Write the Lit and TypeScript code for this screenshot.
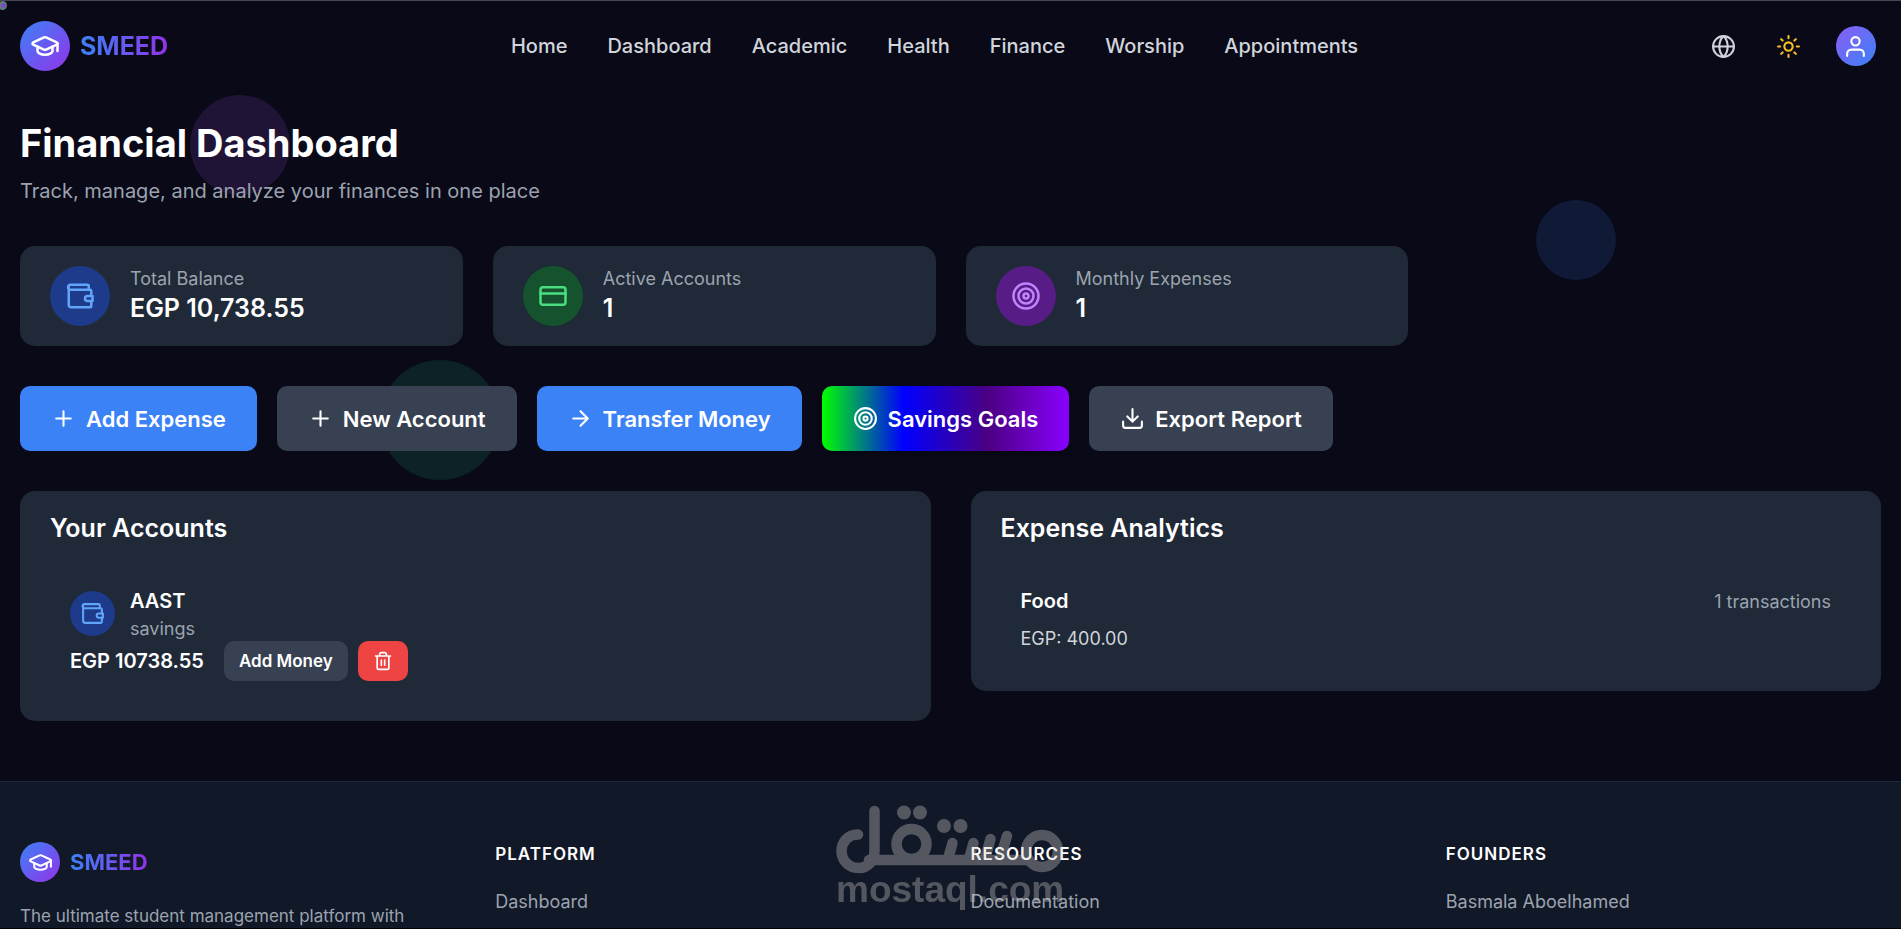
import { LitElement, html, css, svg } from "lit";
import { customElement } from "lit/decorators.js";

const ICONS: Record<string, unknown> = {
  cap: svg`<path d="M21.42 10.92a1 1 0 0 0-.02-1.84L12.83 5.18a2 2 0 0 0-1.66 0l-8.57 3.9a1 1 0 0 0 0 1.83l8.57 3.91a2 2 0 0 0 1.66 0z"/><path d="M22 10v6"/><path d="M6 12.5V16a6 3 0 0 0 12 0v-3.500"/>`,
  globe: svg`<circle cx="12" cy="12" r="10"/><path d="M2 12h20"/><path d="M12 2c2.800 2.700 4 6.200 4 10s-1.200 7.300-4 10c-2.800-2.700-4-6.200-4-10s1.200-7.300 4-10z"/>`,
  sun: svg`<circle cx="12" cy="12" r="4"/><path d="M12 2v2M12 20v2M4.930 4.930l1.410 1.410M17.660 17.660l1.410 1.410M2 12h2M20 12h2M6.340 17.660l-1.410 1.410M19.070 4.930l-1.410 1.410"/>`,
  user: svg`<circle cx="12" cy="7" r="4"/><path d="M20 21v-2a4 4 0 0 0-4-4H8a4 4 0 0 0-4 4v2"/>`,
  wallet: svg`<path d="M19 7V4a1 1 0 0 0-1-1H4.500a2 2 0 0 0 0 4H20a1 1 0 0 1 1 1v4M3 5v14a2 2 0 0 0 2 2h15a1 1 0 0 0 1-1v-4"/><path d="M22 12h-4a2 2 0 0 0 0 4h4z"/>`,
  card: svg`<rect x="2" y="5" width="20" height="14" rx="2"/><path d="M2 10h20"/>`,
  target: svg`<circle cx="12" cy="12" r="10"/><circle cx="12" cy="12" r="6"/><circle cx="12" cy="12" r="2"/>`,
  plus: svg`<path d="M5 12h14M12 5v14"/>`,
  arrow: svg`<path d="M5 12h14M12 5l7 7-7 7"/>`,
  download: svg`<path d="M21 15v4a2 2 0 0 1-2 2H5a2 2 0 0 1-2-2v-4M7 10l5 5 5-5M12 15V3"/>`,
  trash: svg`<path d="M3 6h18M19 6v14a2 2 0 0 1-2 2H7a2 2 0 0 1-2-2V6M8 6V4a2 2 0 0 1 2-2h4a2 2 0 0 1 2 2v2M10 11v6M14 11v6"/>`,
};

const icon = (name: string, size: string) => html`
  <svg class="icon ${size}" viewBox="0 0 24 24" aria-hidden="true">${ICONS[name]}</svg>
`;

const NAV = ["Home", "Dashboard", "Academic", "Health", "Finance", "Worship", "Appointments"];

const STATS = [
  { icon: "wallet", tone: "blue", label: "Total Balance", value: "EGP 10,738.55" },
  { icon: "card", tone: "green", label: "Active Accounts", value: "1" },
  { icon: "target", tone: "purple", label: "Monthly Expenses", value: "1" },
];

const ACTIONS = [
  { icon: "plus", tone: "primary", label: "Add Expense" },
  { icon: "plus", tone: "neutral", label: "New Account" },
  { icon: "arrow", tone: "primary", label: "Transfer Money" },
  { icon: "target", tone: "rainbow", label: "Savings Goals" },
  { icon: "download", tone: "neutral", label: "Export Report" },
];

const FOOTER = [
  { title: "Platform", link: "Dashboard" },
  { title: "Resources", link: "Documentation" },
  { title: "Founders", link: "Basmala Aboelhamed" },
];

@customElement("app-root")
export class AppRoot extends LitElement {
  static styles = css`
    :host {
      display: block;
      position: relative;
      height: 100vh;
      overflow: hidden;
      box-sizing: border-box;
      border-top: 1px solid #46474f;
      border-bottom: 1px solid #000;
      background: #090918;
      color: #fff;
      font-family: Inter, "Liberation Sans", sans-serif;
      font-size: 18px;
      line-height: 25px;
    }
    * { box-sizing: border-box; }
    h1, h2, h3, p { margin: 0; }
    a { color: inherit; text-decoration: none; }
    button {
      border: 0;
      padding: 0;
      background: none;
      color: inherit;
      font: inherit;
      cursor: pointer;
    }
    .icon {
      display: block;
      flex: none;
      fill: none;
      stroke: currentColor;
      stroke-width: 2;
      stroke-linecap: round;
      stroke-linejoin: round;
    }
    .s20 { width: 20px; height: 20px; }
    .s25 { width: 25px; height: 25px; }
    .s30 { width: 30px; height: 30px; }

    .header {
      position: relative;
      display: flex;
      justify-content: space-between;
      align-items: center;
      height: 90px;
      padding: 0 25px 0 20px;
    }
    .brand { display: flex; align-items: center; gap: 10px; }
    .badge {
      display: grid;
      place-items: center;
      width: 50px;
      height: 50px;
      border-radius: 50%;
      background: linear-gradient(135deg, #3b82f6, #9333ea);
      color: #fff;
    }
    .badge.small { width: 40px; height: 40px; }
    .wordmark {
      background: linear-gradient(90deg, #3b82f6, #9333ea);
      background-clip: text;
      -webkit-background-clip: text;
      color: transparent;
      font-size: 25px;
      line-height: 35px;
      font-weight: 700;
    }
    .wordmark.small { font-size: 22px; }
    .nav { display: flex; gap: 40px; color: #d1d5db; font-size: 20px; font-weight: 500; }
    .tools { display: flex; align-items: center; gap: 20px; }
    .tool { display: grid; place-items: center; width: 45px; height: 45px; color: #d1d5db; }
    .tool.sun { color: #fbbf24; }
    .avatar {
      display: grid;
      place-items: center;
      width: 40px;
      height: 40px;
      margin-left: 5px;
      border-radius: 50%;
      background: linear-gradient(135deg, #8b5cf6, #3b82f6);
    }

    .speck {
      position: absolute;
      left: -2px;
      top: 0;
      width: 9px;
      height: 9px;
      border-radius: 50%;
      background: radial-gradient(circle at 60% 50%, #7c3aed 10%, #6b7280 40%, #3f8f6b 80%);
    }
    .orb { position: absolute; border-radius: 50%; }
    .orb.violet { left: 10%; top: 94px; width: 100px; height: 100px; background: #201436; }
    .orb.navy { right: 15%; top: 199px; width: 80px; height: 80px; background: #101935; }
    .orb.forest { left: 20%; top: 359px; width: 120px; height: 120px; background: #0c2225; }

    .main { position: relative; padding: 30px 20px 60px; }
    .title { font-size: 38px; line-height: 45px; font-weight: 700; }
    .subtitle { margin-top: 10px; color: #9ca3af; font-size: 20px; line-height: 30px; }

    .stats {
      display: grid;
      grid-template-columns: repeat(4, 1fr);
      gap: 30px;
      margin-top: 40px;
    }
    .stat {
      display: flex;
      align-items: center;
      gap: 20px;
      padding: 20px 30px;
      border-radius: 15px;
      background: #1f2937;
    }
    .disc {
      display: grid;
      place-items: center;
      flex: none;
      width: 60px;
      height: 60px;
      border-radius: 50%;
    }
    .disc.small { width: 45px; height: 45px; }
    .blue { background: #1e3a8a; color: #60a5fa; }
    .green { background: #14532d; color: #4ade80; }
    .purple { background: #581c87; color: #c084fc; }
    .muted { color: #9ca3af; }
    .value { font-size: 25px; line-height: 35px; font-weight: 600; }

    .actions { display: flex; flex-wrap: wrap; gap: 20px; margin-top: 40px; }
    .action {
      display: flex;
      align-items: center;
      gap: 10px;
      height: 65px;
      padding: 0 31px;
      border-radius: 10px;
      font-size: 22px;
      line-height: 30px;
      font-weight: 600;
    }
    .primary { background: #3b82f6; }
    .neutral { background: #374151; }
    .rainbow {
      background: linear-gradient(90deg, #00ff00, #0000ff 33%, #4b0082 67%, #8b00ff);
      box-shadow: 0 5px 8px rgb(0 0 0 / 15%);
    }

    .panels {
      display: grid;
      grid-template-columns: repeat(2, 1fr);
      align-items: start;
      gap: 40px;
      margin-top: 40px;
    }
    .panel { padding: 20px 30px; border-radius: 15px; background: #1f2937; }
    .heading { font-size: 25px; line-height: 35px; font-weight: 600; }
    .entry { margin-top: 20px; padding: 20px; }
    .holder { display: flex; align-items: center; gap: 15px; }
    .name { font-size: 20px; line-height: 30px; font-weight: 600; }
    .row { display: flex; align-items: center; }
    .row.spread { justify-content: space-between; }
    .amount { margin-right: 20px; font-size: 20px; font-weight: 600; }
    .chip {
      display: grid;
      place-items: center;
      height: 40px;
      padding: 0 15px;
      margin-right: 10px;
      border-radius: 10px;
      font-size: 17px;
      font-weight: 600;
    }
    .danger { background: #ef4444; }
    .total { margin-top: 10px; color: #d1d5db; }

    .footer {
      position: relative;
      display: grid;
      grid-template-columns: repeat(4, 1fr);
      gap: 40px;
      padding: 60px 20px;
      border-top: 1px solid #1f2937;
      background: #111827;
      color: #9ca3af;
    }
    .blurb { margin-top: 20px; font-size: 17px; line-height: 28px; }
    .caption {
      color: #fff;
      font-size: 17px;
      font-weight: 600;
      letter-spacing: 1px;
      text-transform: uppercase;
    }
    .link { display: block; margin-top: 20px; line-height: 30px; }

    .watermark {
      position: absolute;
      left: 44%;
      top: 23px;
      width: 236px;
      height: 110px;
      opacity: 0.34;
      pointer-events: none;
    }
    .strokes { fill: none; stroke: #d4d0cf; stroke-width: 10.5; stroke-linecap: round; }
    .dots { fill: #d4d0cf; }
    .domain { fill: #d4d0cf; font-family: "Liberation Sans", sans-serif; font-size: 37px; font-weight: 700; }
  `;

  private brand(size: string) {
    return html`
      <a class="brand" href="#">
        <span class="badge ${size}">${icon("cap", size ? "s25" : "s30")}</span>
        <span class="wordmark ${size}">SMEED</span>
      </a>
    `;
  }

  render() {
    return html`
      <div class="speck"></div>
      <div class="orb violet"></div>
      <div class="orb navy"></div>
      <div class="orb forest"></div>

      <header class="header">
        ${this.brand("")}
        <nav class="nav">${NAV.map((n) => html`<a href="#">${n}</a>`)}</nav>
        <div class="tools">
          <button class="tool" aria-label="Language">${icon("globe", "s25")}</button>
          <button class="tool sun" aria-label="Theme">${icon("sun", "s25")}</button>
          <button class="avatar" aria-label="Profile">${icon("user", "s25")}</button>
        </div>
      </header>

      <main class="main">
        <h1 class="title">Financial Dashboard</h1>
        <p class="subtitle">Track, manage, and analyze your finances in one place</p>

        <section class="stats">
          ${STATS.map(
            (s) => html`
              <div class="stat">
                <span class="disc ${s.tone}">${icon(s.icon, "s30")}</span>
                <div>
                  <p class="muted">${s.label}</p>
                  <p class="value">${s.value}</p>
                </div>
              </div>
            `
          )}
        </section>

        <div class="actions">
          ${ACTIONS.map(
            (a) => html`<button class="action ${a.tone}">${icon(a.icon, "s25")}${a.label}</button>`
          )}
        </div>

        <div class="panels">
          <section class="panel">
            <h2 class="heading">Your Accounts</h2>
            <div class="entry">
              <div class="holder">
                <span class="disc small blue">${icon("wallet", "s25")}</span>
                <div>
                  <h3 class="name">AAST</h3>
                  <p class="muted">savings</p>
                </div>
              </div>
              <div class="row">
                <span class="amount">EGP 10738.55</span>
                <button class="chip neutral">Add Money</button>
                <button class="chip danger" aria-label="Delete account">${icon("trash", "s20")}</button>
              </div>
            </div>
          </section>
          <section class="panel">
            <h2 class="heading">Expense Analytics</h2>
            <div class="entry">
              <div class="row spread">
                <h3 class="name">Food</h3>
                <span class="muted">1 transactions</span>
              </div>
              <p class="total">EGP: 400.00</p>
            </div>
          </section>
        </div>
      </main>

      <footer class="footer">
        <div>
          ${this.brand("small")}
          <p class="blurb">The ultimate student management platform with</p>
        </div>
        ${FOOTER.map(
          (c) => html`
            <div>
              <h3 class="caption">${c.title}</h3>
              <a class="link" href="#">${c.link}</a>
            </div>
          `
        )}
        <svg class="watermark" viewBox="0 0 236 110" role="img" aria-label="mostaql.com">
          <g class="strokes">
            <path d="M22 29.500C11 29.500 5.500 38 5.500 46c0 9 7 17 17 17s16-8 16-18V6"/>
            <path d="M33 55H190"/>
            <circle cx="75.500" cy="39" r="15"/>
            <path d="M112 54l4.500-16M133 54l4.500-16M149 54l5.500-20M164 54l7-23"/>
            <circle cx="206" cy="46" r="16"/>
          </g>
          <g class="dots">
            <circle cx="68" cy="7.500" r="7"/><circle cx="84" cy="7.500" r="7"/>
            <circle cx="108" cy="21" r="7"/><circle cx="124.500" cy="21" r="7"/>
          </g>
          <text class="domain" x="0" y="97">mostaql.com</text>
        </svg>
      </footer>
    `;
  }
}
